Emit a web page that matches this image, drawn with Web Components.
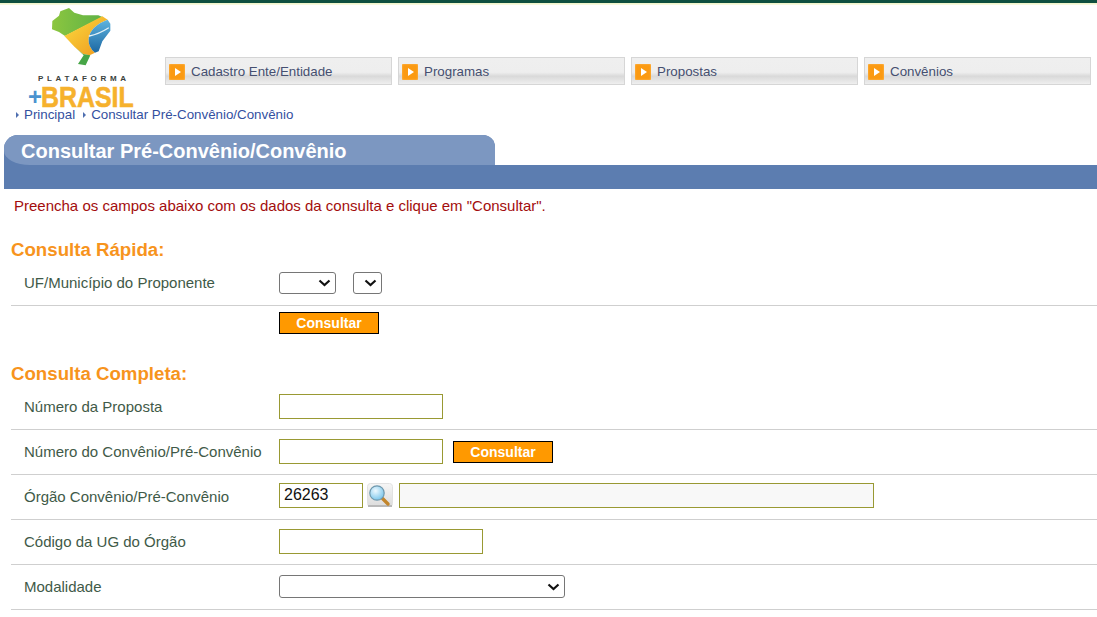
<!DOCTYPE html>
<html lang="pt-BR">
<head>
<meta charset="utf-8">
<title>Consultar Pré-Convênio/Convênio</title>
<style>
    html, body { margin: 0; padding: 0; background: #fff; overflow: hidden; }
    body { font-family: "Liberation Sans", Arial, sans-serif; }
</style>
</head>
<body>
<pb-header>
    <menu-tab>Cadastro Ente/Entidade</menu-tab>
    <menu-tab>Programas</menu-tab>
    <menu-tab>Propostas</menu-tab>
    <menu-tab>Convênios</menu-tab>
</pb-header>
<bread-crumbs items="Principal|Consultar Pré-Convênio/Convênio"></bread-crumbs>
<page-title>Consultar Pré-Convênio/Convênio</page-title>
<hint-text>Preencha os campos abaixo com os dados da consulta e clique em "Consultar".</hint-text>

<section-title style="margin-top:25px">Consulta Rápida:</section-title>
<form-row label="UF/Município do Proponente">
    <native-select width="57"></native-select>
    <native-select width="29" style="margin-left:17px"></native-select>
</form-row>
<form-row compact>
    <orange-button>Consultar</orange-button>
</form-row>

<section-title style="margin-top:22px">Consulta Completa:</section-title>
<form-row label="Número da Proposta">
    <text-field width="164"></text-field>
</form-row>
<form-row label="Número do Convênio/Pré-Convênio">
    <text-field width="164"></text-field>
    <orange-button style="margin-left:10px">Consultar</orange-button>
</form-row>
<form-row label="Órgão Convênio/Pré-Convênio">
    <text-field width="84" value="26263" style="margin-bottom:2px"></text-field>
    <search-icon style="margin-bottom:2px"></search-icon>
    <text-field width="475" readonly style="margin:0 0 2px 6px"></text-field>
</form-row>
<form-row label="Código da UG do Órgão">
    <text-field width="204"></text-field>
</form-row>
<form-row label="Modalidade">
    <native-select width="286" height="23"></native-select>
</form-row>

<script>
const esc = s => String(s)
    .replace(/&/g, '&amp;').replace(/</g, '&lt;')
    .replace(/>/g, '&gt;').replace(/"/g, '&quot;');

class PbHeader extends HTMLElement {
    constructor() {
        super();
        this.attachShadow({ mode: 'open' }).innerHTML = `
            <style>
                :host { display: block; }
                .topbar { height: 5px; background: linear-gradient(#0f4f3f 0 3px, #eef3c4 3px, #fafbe6 5px); }
                .main { display: flex; align-items: flex-start; height: 102px; }
                .logo { width: 165px; flex-shrink: 0; display: flex; flex-direction: column; }
                .map { display: block; margin: 2px 0 0 52px; }
                .plat {
                    font: bold 8px/9px "Liberation Sans", Arial, sans-serif;
                    letter-spacing: 3.7px;
                    color: #3a3f3c;
                    margin: 7px 0 0 38px;
                    white-space: nowrap;
                }
                .brasil {
                    margin: 3px 0 0 28px;
                    display: flex;
                    height: 21px;
                    font: bold 30px/21px "Liberation Sans", Arial, sans-serif;
                    white-space: nowrap;
                }
                .plus { width: 13px; font-size: 24px; color: #4b93cf; }
                .name {
                    color: #f6b12d;
                    -webkit-text-stroke: 0.6px #f6b12d;
                    transform: scaleX(0.83);
                    transform-origin: 0 50%;
                }
                nav { display: flex; gap: 6px; margin-top: 52px; }
            </style>
            <div class="topbar"></div>
            <div class="main">
                <div class="logo">
                    <svg class="map" width="60" height="60" viewBox="97 5 180 180">
                        <defs>
                            <linearGradient id="y" x1="0" y1="0" x2="1" y2="1">
                                <stop offset="0" stop-color="#fbdc3f"/>
                                <stop offset="1" stop-color="#ef971d"/>
                            </linearGradient>
                            <linearGradient id="b" x1="0" y1="0" x2="0" y2="1">
                                <stop offset="0" stop-color="#5fb4df"/>
                                <stop offset="1" stop-color="#1c68a3"/>
                            </linearGradient>
                            <linearGradient id="g" x1="0" y1="0" x2="1" y2="0">
                                <stop offset="0" stop-color="#8cc63f"/>
                                <stop offset="1" stop-color="#5fb246"/>
                            </linearGradient>
                        </defs>
                        <path fill="url(#g)" d="M98 47 L118 31 L122 18 L148 8 L164 22 L190 30 L236 30 L248 35 L136 92 L118 80 L97 72 Z"/>
                        <path fill="url(#y)" d="M134 92 L248 33 L264 43 Q212 62 207 100 Q205 125 226 142 L210 150 L190 146 L165 125 Z"/>
                        <path fill="url(#b)" d="M264 43 L272 55 L272 76 L248 108 L237 138 L226 142 Q205 125 207 100 Q212 62 264 43 Z"/>
                        <path fill="none" stroke="#e4f2f8" stroke-width="4" stroke-linecap="round" d="M209 92 Q238 86 266 68"/>
                        <path fill="#46a546" d="M168 127 L190 146 L212 150 L198 180 L175 176 L192 150 Z"/>
                    </svg>
                    <div class="plat">PLATAFORMA</div>
                    <div class="brasil"><span class="plus">+</span><span class="name">BRASIL</span></div>
                </div>
                <nav><slot></slot></nav>
            </div>`;
    }
}

class MenuTab extends HTMLElement {
    constructor() {
        super();
        this.attachShadow({ mode: 'open' }).innerHTML = `
            <style>
                :host {
                    display: flex;
                    align-items: center;
                    box-sizing: border-box;
                    width: 227px;
                    height: 28px;
                    border: 1px solid #d6d6d6;
                    background: linear-gradient(#efefef 0, #eeeeee 55%, #d9d9d9 70%, #efefef 100%);
                    font: 13.33px "Liberation Sans", Arial, sans-serif;
                    color: #454f70;
                }
                .ico {
                    width: 16px; height: 16px;
                    margin: 2px 6px 0 3px;
                    background: #fb9a12;
                    border-radius: 1px;
                    display: flex; align-items: center; justify-content: center;
                    box-shadow: inset 0 0 2px #ffc46e;
                }
                .ico i {
                    border-left: 6px solid #fff;
                    border-top: 4.5px solid transparent;
                    border-bottom: 4.5px solid transparent;
                    margin-left: 1px;
                }
            </style>
            <span class="ico"><i></i></span><slot></slot>`;
    }
}

class BreadCrumbs extends HTMLElement {
    connectedCallback() {
        const items = (this.getAttribute('items') || '').split('|');
        this.attachShadow({ mode: 'open' }).innerHTML = `
            <style>
                :host {
                    display: flex;
                    gap: 8px;
                    height: 28px;
                    padding: 0 0 0 16px;
                    font: 13.33px/16px "Liberation Sans", Arial, sans-serif;
                    color: #33509f;
                }
                span { display: flex; align-items: center; height: 16px; }
                i {
                    border-left: 3px solid #4f6fb0;
                    border-top: 3px solid transparent;
                    border-bottom: 3px solid transparent;
                    margin-right: 5px;
                }
            </style>
            ${items.map(t => `<span><i></i>${esc(t)}</span>`).join('')}`;
    }
}

class PageTitle extends HTMLElement {
    constructor() {
        super();
        this.attachShadow({ mode: 'open' }).innerHTML = `
            <style>
                :host {
                    display: block;
                    margin-left: 4px;
                    height: 54px;
                    background: linear-gradient(#5c7db0, #5c7db0) 0 30px / 100% 24px no-repeat;
                }
                .tab {
                    box-sizing: border-box;
                    width: 491px;
                    height: 30px;
                    background: #5c7db0;
                    border-radius: 14px 12px 0 0;
                    overflow: hidden;
                }
                .in {
                    box-sizing: border-box;
                    height: 30px;
                    padding-left: 17px;
                    background: #7c97c1;
                    border-radius: 0 0 0 26px / 0 0 0 14px;
                    font: bold 20px/32px "Liberation Sans", Arial, sans-serif;
                    color: #fff;
                    white-space: nowrap;
                }
            </style>
            <div class="tab"><div class="in"><slot></slot></div></div>`;
    }
}

class HintText extends HTMLElement {
    constructor() {
        super();
        this.attachShadow({ mode: 'open' }).innerHTML = `
            <style>
                :host {
                    display: block;
                    margin: 8px 0 0 14px;
                    font: 15px/18px "Liberation Sans", Arial, sans-serif;
                    color: #a30d0d;
                }
            </style>
            <slot></slot>`;
    }
}

class SectionTitle extends HTMLElement {
    constructor() {
        super();
        this.attachShadow({ mode: 'open' }).innerHTML = `
            <style>
                :host {
                    display: block;
                    margin-left: 11px;
                    font: bold 18.67px/20px "Liberation Sans", Arial, sans-serif;
                    color: #f7941d;
                    height: 21px;
                }
            </style>
            <slot></slot>`;
    }
}

class FormRow extends HTMLElement {
    connectedCallback() {
        const label = this.getAttribute('label') || '';
        const compact = this.hasAttribute('compact');
        this.attachShadow({ mode: 'open' }).innerHTML = `
            <style>
                :host {
                    display: grid;
                    grid-template-columns: 268px 1fr;
                    align-items: ${compact ? 'start' : 'center'};
                    box-sizing: border-box;
                    margin-left: 11px;
                    height: ${compact ? 36 : 45}px;
                    ${compact ? 'padding-top: 6px;' : 'border-bottom: 1px solid #cfcfcf;'}
                }
                .label {
                    padding: 0 0 2px 13px;
                    font: 15px "Liberation Sans", Arial, sans-serif;
                    color: #3f5a48;
                    white-space: nowrap;
                }
                .field { display: flex; align-items: center; margin-bottom: ${compact ? 0 : 1}px; }
            </style>
            <div class="label">${esc(label)}</div>
            <div class="field"><slot></slot></div>`;
    }
}

class NativeSelect extends HTMLElement {
    connectedCallback() {
        const w = this.getAttribute('width') || 60;
        const h = this.getAttribute('height') || 22;
        this.attachShadow({ mode: 'open' }).innerHTML = `
            <style>
                :host { display: block; position: relative; }
                select {
                    display: block;
                    box-sizing: border-box;
                    width: ${w}px;
                    height: ${h}px;
                    margin: 0;
                    appearance: none;
                    border: 1px solid #767676;
                    border-radius: 3px;
                    background: #fff;
                    font: 14px "Liberation Sans", Arial, sans-serif;
                }
                svg { position: absolute; right: 5px; top: 50%; margin-top: -4px; pointer-events: none; }
            </style>
            <select aria-label="Selecionar"><option></option></select>
            <svg width="13" height="8" viewBox="0 0 13 8">
                <path d="M1.5 1.5 L6.5 6 L11.5 1.5" fill="none" stroke="#111" stroke-width="2.2"/>
            </svg>`;
    }
}

class TextField extends HTMLElement {
    connectedCallback() {
        const w = this.getAttribute('width') || 160;
        const ro = this.hasAttribute('readonly');
        const val = this.getAttribute('value') || '';
        this.attachShadow({ mode: 'open' }).innerHTML = `
            <style>
                :host { display: block; }
                input {
                    display: block;
                    box-sizing: border-box;
                    width: ${w}px;
                    height: 25px;
                    margin: 0;
                    padding: 0 4px 2px;
                    border: 1px solid #999933;
                    outline: none;
                    background: ${ro ? '#f8f8f8' : '#fff'};
                    color: #111;
                    font: 16px "Liberation Sans", Arial, sans-serif;
                }
            </style>
            <input type="text" value="${esc(val)}" ${ro ? 'readonly' : ''} aria-label="Campo">`;
    }
}

class OrangeButton extends HTMLElement {
    constructor() {
        super();
        this.attachShadow({ mode: 'open' }).innerHTML = `
            <style>
                :host { display: block; }
                button {
                    display: block;
                    box-sizing: border-box;
                    width: 100px;
                    height: 22px;
                    padding: 0;
                    border: 1px solid #000;
                    background: #ff9900;
                    color: #fff;
                    font: bold 14px "Liberation Sans", Arial, sans-serif;
                }
            </style>
            <button type="button"><slot></slot></button>`;
    }
}

class SearchIcon extends HTMLElement {
    constructor() {
        super();
        this.attachShadow({ mode: 'open' }).innerHTML = `
            <style>
                :host { display: block; margin-left: 4px; width: 26px; height: 25px; }
                svg { display: block; }
            </style>
            <svg width="26" height="25" viewBox="0 0 26 25">
                <defs>
                    <linearGradient id="bg" x1="0" y1="0" x2="0" y2="1">
                        <stop offset="0" stop-color="#f6f6f6"/>
                        <stop offset="1" stop-color="#dcdcdc"/>
                    </linearGradient>
                    <radialGradient id="gl" cx="0.4" cy="0.35" r="0.7">
                        <stop offset="0" stop-color="#eef9ff"/>
                        <stop offset="1" stop-color="#74c3ea"/>
                    </radialGradient>
                </defs>
                <rect x="0.5" y="0.5" width="25" height="23" rx="3" fill="url(#bg)" stroke="#e2e2e2"/>
                <rect x="1" y="22" width="24" height="2" fill="#b9b9b9"/>
                <path d="M15.5 15.5 L21 21" stroke="#c2852b" stroke-width="3.4" stroke-linecap="round"/>
                <circle cx="10" cy="10" r="7.2" fill="url(#gl)" stroke="#6f98ad" stroke-width="1.2"/>
            </svg>`;
    }
}

customElements.define('pb-header', PbHeader);
customElements.define('menu-tab', MenuTab);
customElements.define('bread-crumbs', BreadCrumbs);
customElements.define('page-title', PageTitle);
customElements.define('hint-text', HintText);
customElements.define('section-title', SectionTitle);
customElements.define('form-row', FormRow);
customElements.define('native-select', NativeSelect);
customElements.define('text-field', TextField);
customElements.define('orange-button', OrangeButton);
customElements.define('search-icon', SearchIcon);
</script>
</body>
</html>
